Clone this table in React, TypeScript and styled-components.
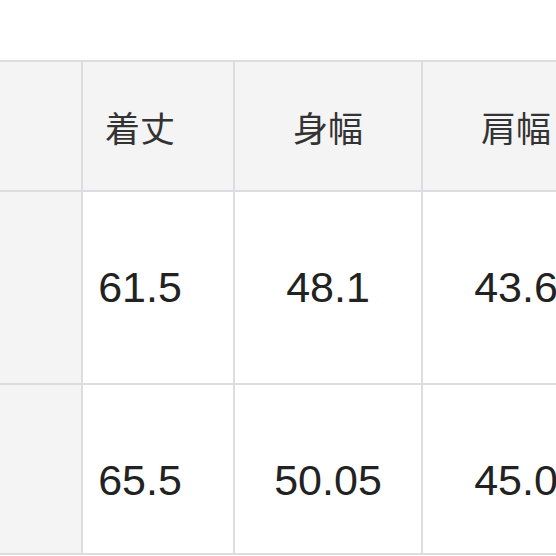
import React from 'react';
import styled, { createGlobalStyle } from 'styled-components';

const GlobalStyle = createGlobalStyle`
  html, body {
    margin: 0;
    padding: 0;
    background: #ffffff;
    overflow: hidden;
  }
`;

const Page = styled.div`
  width: 556px;
  height: 556px;
  overflow: hidden;
  padding-top: 60px;
  box-sizing: border-box;
`;

const SizeTable = styled.div`
  display: grid;
  grid-template-columns: 81px 150px 186px 186px;
  grid-template-rows: 128px 191px 168px;
  gap: 2px;
  width: 609px;
  background: #dddde0;
  padding: 2px 0;
`;

type CellProps = {
  $head?: boolean;
  $label?: boolean;
  $narrow?: boolean;
  $last?: boolean;
};

const Cell = styled.div<CellProps>`
  display: flex;
  align-items: center;
  justify-content: center;
  box-sizing: border-box;
  background: ${(p) => (p.$head || p.$label ? '#f4f4f5' : '#ffffff')};
  padding-right: ${(p) => (p.$narrow ? '36px' : '0')};
  padding-top: ${(p) => (p.$last ? '22px' : '0')};
  color: ${(p) => (p.$head ? '#333333' : '#222222')};
  font-family: ${(p) =>
    p.$head
      ? '"Noto Sans CJK JP", "Noto Sans", sans-serif'
      : '"Liberation Sans", Arial, sans-serif'};
  font-size: ${(p) => (p.$head ? '35px' : '43px')};
  font-weight: 400;
  white-space: nowrap;
`;

const headers = ['着丈', '身幅', '肩幅'];
const rows = [
  ['61.5', '48.1', '43.6'],
  ['65.5', '50.05', '45.0'],
];

const App = () => {
  return (
    <Page>
      <GlobalStyle />
      <SizeTable>
        <Cell $head />
        {headers.map((h, i) => (
          <Cell key={h} $head $narrow={i === 0}>
            {h}
          </Cell>
        ))}
        {rows.map((row, r) => (
          <React.Fragment key={r}>
            <Cell $label $last={r === rows.length - 1} />
            {row.map((v, i) => (
              <Cell key={i} $narrow={i === 0} $last={r === rows.length - 1}>
                {v}
              </Cell>
            ))}
          </React.Fragment>
        ))}
      </SizeTable>
    </Page>
  );
};

export default App;
